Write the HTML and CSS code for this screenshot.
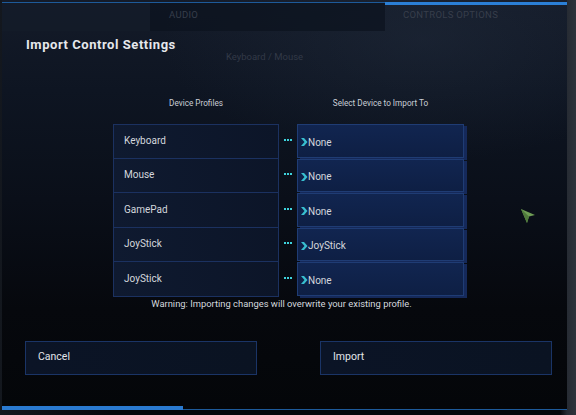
FILE: index.html
```html
<!DOCTYPE html>
<html lang="en">
<head>
    <meta charset="UTF-8">
    <meta name="viewport" content="width=device-width, initial-scale=1.0">
    <title>Import Control Settings</title>
    <link rel="stylesheet" href="styles.css">
</head>
<body>
    <div class="screen">
        <div class="panel">
            <div class="tabs">
                <div class="tab tab-blank"></div>
                <div class="tab tab-audio">AUDIO</div>
                <div class="tab tab-active">CONTROLS OPTIONS</div>
            </div>

            <h2 class="title">Import Control Settings</h2>
            <div class="subtitle">Keyboard / Mouse</div>

            <div class="headers">
                <div class="header">Device Profiles</div>
                <div class="header-gap"></div>
                <div class="header">Select Device to Import To</div>
            </div>

            <div class="table">
                <div class="profile">Keyboard</div>
                <div class="dots"><i></i><i></i><i></i></div>
                <div class="target"><svg class="chev" viewBox="0 0 7 8"><path d="M0 0H3L6.5 4L3 8H0L3.5 4Z"/></svg>None</div>

                <div class="profile">Mouse</div>
                <div class="dots"><i></i><i></i><i></i></div>
                <div class="target"><svg class="chev" viewBox="0 0 7 8"><path d="M0 0H3L6.5 4L3 8H0L3.5 4Z"/></svg>None</div>

                <div class="profile">GamePad</div>
                <div class="dots"><i></i><i></i><i></i></div>
                <div class="target"><svg class="chev" viewBox="0 0 7 8"><path d="M0 0H3L6.5 4L3 8H0L3.5 4Z"/></svg>None</div>

                <div class="profile">JoyStick</div>
                <div class="dots"><i></i><i></i><i></i></div>
                <div class="target"><svg class="chev" viewBox="0 0 7 8"><path d="M0 0H3L6.5 4L3 8H0L3.5 4Z"/></svg>JoyStick</div>

                <div class="profile">JoyStick</div>
                <div class="dots"><i></i><i></i><i></i></div>
                <div class="target"><svg class="chev" viewBox="0 0 7 8"><path d="M0 0H3L6.5 4L3 8H0L3.5 4Z"/></svg>None</div>
            </div>

            <p class="warning">Warning: Importing changes will overwrite your existing profile.</p>

            <div class="buttons">
                <button class="btn">Cancel</button>
                <button class="btn">Import</button>
            </div>

            <div class="bottom-bar"><span class="progress"></span></div>
        </div>

        <svg class="cursor" width="16" height="16" viewBox="0 0 16 16">
            <path d="M1 1L15 7L9 8.5L7 15Z" fill="#6f9d55"/>
            <path d="M1 1L9 8.5L7 15Z" fill="#4f7a3c"/>
        </svg>
    </div>
</body>
</html>
```

FILE: styles.css
```css
body {
    margin: 0;
    background: #05070b;
    font-family: Roboto, "DejaVu Sans", sans-serif;
}

.screen {
    position: relative;
    width: 576px;
    height: 415px;
    overflow: hidden;
    background:
        linear-gradient(90deg, rgba(60, 70, 85, 0.25) 0, rgba(0, 0, 0, 0) 110px),
        linear-gradient(90deg, rgba(0, 0, 0, 0) 560px, #262b33 567px, #2e333b 576px),
        #06080c;
}

.panel {
    margin-left: 2px;
    width: 565px;
    height: 408px;
    padding-top: 2px;
    background:
        radial-gradient(ellipse 260px 120px at 420px 40px, rgba(40, 52, 70, 0.35), rgba(0, 0, 0, 0)),
        linear-gradient(180deg, #141b29 0, #0e1522 90px, #0a0f19 200px, #06080d 310px, #040609 408px);
    display: flex;
    flex-direction: column;
}

.tabs {
    display: flex;
    height: 28px;
    border-top: 1px solid #1d5a9a;
}

.tab {
    font-size: 9.5px;
    color: #373e4b;
    letter-spacing: 0.3px;
    padding-top: 6px;
    box-sizing: border-box;
}

.tab-blank {
    width: 148px;
    background: rgba(20, 28, 42, 0.6);
}

.tab-audio {
    width: 235px;
    padding-left: 19px;
    background: rgba(12, 18, 30, 0.7);
}

.tab-active {
    flex: 1;
    padding-left: 18px;
    margin-top: -1px;
    border-top: 3px solid #2b7fd6;
    padding-top: 4px;
}

.title {
    margin: 6px 0 0 24px;
    font-size: 13px;
    font-weight: bold;
    color: #e6e8ec;
    letter-spacing: 0.55px;
    line-height: 16px;
}

.subtitle {
    margin-top: -2px;
    text-align: center;
    font-size: 9.5px;
    color: #323947;
    line-height: 12px;
    padding-right: 40px;
}

.headers {
    display: grid;
    grid-template-columns: 166px 18px 167px;
    margin: 34px 0 0 111px;
    font-size: 8.2px;
    color: #c9ced6;
    line-height: 12px;
}

.header {
    text-align: center;
}

.table {
    display: grid;
    grid-template-columns: 166px 18px 167px;
    grid-auto-rows: 34.5px;
    margin: 15px 0 0 111px;
    font-size: 10px;
    color: #d3d7dd;
}

.profile {
    display: flex;
    align-items: center;
    padding: 0 0 1px 10px;
    border: 1px solid #1b3160;
    margin-top: -1px;
    background: linear-gradient(90deg, #0f1a30, #0c1528);
}

.profile:first-child {
    margin-top: 0;
}

.dots {
    display: flex;
    align-items: center;
    justify-content: center;
    gap: 1px;
    padding-bottom: 3px;
}

.dots i {
    width: 2px;
    height: 2px;
    background: #3ed2dc;
}

.target {
    display: flex;
    align-items: center;
    padding: 3px 0 0 3px;
    margin: 0 0 1px 0;
    border: 1px solid #1f3c74;
    background: linear-gradient(180deg, #112550, #0e1f44);
    box-shadow: 3px 2px 0 #15295a;
}

.chev {
    width: 7px;
    height: 8px;
    fill: #38bfd0;
}

.warning {
    margin: 1px 0 0 0;
    text-align: center;
    font-size: 9.4px;
    color: #d4d8de;
    line-height: 12px;
    padding-right: 6px;
}

.buttons {
    display: flex;
    justify-content: space-between;
    margin: 31px 0 0 23px;
    width: 527px;
}

.btn {
    width: 232px;
    height: 34px;
    text-align: left;
    padding: 0 0 2px 12px;
    font-family: Roboto, "DejaVu Sans", sans-serif;
    font-size: 10.5px;
    color: #e2e5ea;
    background: linear-gradient(90deg, #0b1426, #0a1322);
    border: 1px solid #1a3466;
}

.bottom-bar {
    margin-top: auto;
    height: 1px;
    background: #1d5a9a;
    position: relative;
}

.progress {
    position: absolute;
    left: 0;
    bottom: 0;
    width: 181px;
    height: 4px;
    background: #2a7ad0;
}

.cursor {
    position: absolute;
    left: 520px;
    top: 208px;
}
```
